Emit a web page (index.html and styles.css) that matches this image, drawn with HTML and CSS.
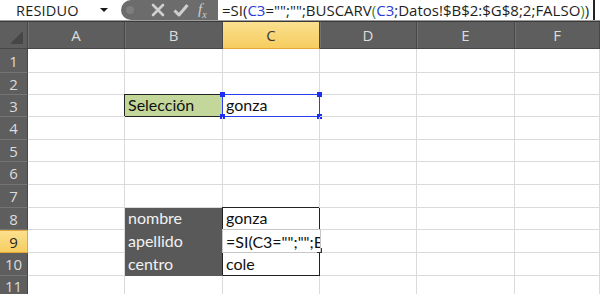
FILE: index.html
```html
<html>
  <head>
    <title>Libro1 - Excel</title>
    <link rel="stylesheet" href="styles.css">
  </head>
  <body>
    <div class="formulaBar">
      <div class="nameBox">
        <span class="nameText">RESIDUO</span>
        <span class="nameArrow"></span>
      </div>
      <div class="fxButtons">
        <span class="grip"></span>
        <svg class="fxIcon" width="14" height="14" viewBox="0 0 14 14">
          <path d="M2 2 L12 12 M12 2 L2 12" stroke="#cfcfcf" stroke-width="2.6" stroke-linecap="round"/>
        </svg>
        <svg class="fxIcon" width="16" height="14" viewBox="0 0 16 14">
          <path d="M1.5 7.5 L6 12 L14.5 2" fill="none" stroke="#cfcfcf" stroke-width="3" stroke-linejoin="round"/>
        </svg>
        <span class="fxLabel"><i>f</i><sub>x</sub></span>
      </div>
      <div class="formulaInput">
        <span>=SI(</span><span class="refBlue">C3</span><span>="";"";BUSCARV</span><span class="refGreen">(</span><span class="refBlue">C3</span><span>;Datos!$B$2:$G$8;2;FALSO</span><span class="refGreen">)</span><span>)</span>
      </div>
    </div>

    <div class="sheet">
      <!-- column headers -->
      <div class="corner"><span class="cornerTriangle"></span></div>
      <div class="colHead">A</div>
      <div class="colHead">B</div>
      <div class="colHead active">C</div>
      <div class="colHead">D</div>
      <div class="colHead">E</div>
      <div class="colHead">F</div>

      <div class="rowHead">1</div>
      <div class="cell"></div><div class="cell"></div><div class="cell"></div><div class="cell"></div><div class="cell"></div><div class="cell"></div>

      <div class="rowHead">2</div>
      <div class="cell"></div><div class="cell"></div><div class="cell"></div><div class="cell"></div><div class="cell"></div><div class="cell"></div>

      <div class="rowHead">3</div>
      <div class="cell"></div>
      <div class="cell label">Selección</div>
      <div class="cell refCell">gonza
        <span class="handle tl"></span><span class="handle tr"></span>
        <span class="handle bl"></span><span class="handle br"></span>
      </div>
      <div class="cell"></div><div class="cell"></div><div class="cell"></div>

      <div class="rowHead">4</div>
      <div class="cell"></div><div class="cell"></div><div class="cell"></div><div class="cell"></div><div class="cell"></div><div class="cell"></div>

      <div class="rowHead">5</div>
      <div class="cell"></div><div class="cell"></div><div class="cell"></div><div class="cell"></div><div class="cell"></div><div class="cell"></div>

      <div class="rowHead">6</div>
      <div class="cell"></div><div class="cell"></div><div class="cell"></div><div class="cell"></div><div class="cell"></div><div class="cell"></div>

      <div class="rowHead">7</div>
      <div class="cell"></div><div class="cell"></div><div class="cell"></div><div class="cell"></div><div class="cell"></div><div class="cell"></div>

      <div class="rowHead">8</div>
      <div class="cell"></div>
      <div class="cell dark">nombre</div>
      <div class="cell boxed">gonza</div>
      <div class="cell"></div><div class="cell"></div><div class="cell"></div>

      <div class="rowHead active">9</div>
      <div class="cell"></div>
      <div class="cell dark">apellido</div>
      <div class="cell editing">
        <div class="editBox">=SI(C3="";"";B</div>
        <span class="resizeGrip"></span>
      </div>
      <div class="cell"></div><div class="cell"></div><div class="cell"></div>

      <div class="rowHead">10</div>
      <div class="cell"></div>
      <div class="cell dark">centro</div>
      <div class="cell boxed">cole</div>
      <div class="cell"></div><div class="cell"></div><div class="cell"></div>

      <div class="rowHead">11</div>
      <div class="cell"></div><div class="cell"></div><div class="cell"></div><div class="cell"></div><div class="cell"></div><div class="cell"></div>
    </div>
  </body>
</html>
```

FILE: styles.css
```css
body {
  margin: 0;
  width: 600px;
  height: 294px;
  overflow: hidden;
  background-color: white;
  font-family: "Open Sans", "Noto Sans", sans-serif;
}

/* formula bar */
.formulaBar {
  display: flex;
  height: 20px;
  border-bottom: 1px solid #9c9c9c;
  background-color: white;
}

.nameBox {
  display: flex;
  align-items: center;
  width: 121px;
  padding-left: 16px;
  box-sizing: border-box;
}

.nameText {
  font-size: 14.5px;
  color: #1e1e1e;
  letter-spacing: 0.2px;
}

.nameArrow {
  margin-left: 21px;
  width: 0;
  height: 0;
  border-left: 4px solid transparent;
  border-right: 4px solid transparent;
  border-top: 4px solid #1a1a1a;
}

.fxButtons {
  display: flex;
  align-items: center;
  width: 97px;
  height: 20px;
  background-color: #6c6c6c;
  border-radius: 10px 0 0 10px;
  box-sizing: border-box;
  padding-left: 5px;
}

.grip {
  width: 8px;
  height: 8px;
  border-radius: 50%;
  background-color: #7e7e7e;
  margin-right: 17px;
}

.fxIcon {
  margin-right: 8px;
}

.fxLabel {
  font-family: "Liberation Serif", serif;
  color: #cfcfcf;
  font-size: 15px;
  margin-left: 1px;
}

.fxLabel sub {
  font-size: 10px;
  font-style: italic;
}

.formulaInput {
  flex: 1;
  display: flex;
  align-items: center;
  padding-left: 4px;
  margin-right: 5px;
  border-right: 2px solid #222;
  font-size: 15px;
  color: #1e1e1e;
  white-space: nowrap;
  overflow: hidden;
}

.refBlue {
  color: #2a3bd6;
}

.refGreen {
  color: #2e8b3a;
}

/* sheet grid */
.sheet {
  display: grid;
  grid-template-columns: 28px 97px 98px 97px 97px 98px 1fr;
  grid-template-rows: 27px 24px 22px 22px 23px 22px 23px 23px 22px 23px 23px 1fr;
  border-top: 1px solid #3a3a3a;
  font-family: "Lato", "Liberation Sans", sans-serif;
  font-size: 16px;
}

.corner {
  position: relative;
  background-color: #5e5e5e;
  border-right: 1px solid #474747;
  border-bottom: 1px solid #474747;
}

.cornerTriangle {
  position: absolute;
  right: 4px;
  bottom: 4px;
  width: 0;
  height: 0;
  border-left: 13px solid transparent;
  border-bottom: 13px solid #464646;
}

.colHead {
  display: flex;
  align-items: center;
  justify-content: center;
  background-color: #5e5e5e;
  color: #dcdcdc;
  border-right: 1px solid #474747;
  border-bottom: 1px solid #474747;
  box-shadow: inset 1px 0 0 #727272;
  font-family: "Open Sans", sans-serif;
  font-size: 15px;
}

.colHead.active {
  background: linear-gradient(#fbe08f, #f6cd60);
  color: #3a3a3a;
  border-bottom: 1px solid #e3a838;
  box-shadow: none;
}

.rowHead {
  display: flex;
  align-items: center;
  justify-content: center;
  background-color: #5e5e5e;
  color: #dcdcdc;
  border-right: 1px solid #474747;
  border-bottom: 1px solid #747474;
  font-family: "Open Sans", sans-serif;
  font-size: 15px;
}

.rowHead.active {
  background: linear-gradient(#fbe08f, #f6cd60);
  color: #262626;
  border: 1px solid #e3a838;
  border-left: none;
}

.cell {
  position: relative;
  display: flex;
  align-items: flex-end;
  padding: 0 3px 1px;
  border-right: 1px solid #dadada;
  border-bottom: 1px solid #dadada;
  color: #111;
  white-space: nowrap;
  line-height: 20px;
}

.label {
  background-color: #c4d79b;
  border-color: #222;
  box-shadow: -1px -1px 0 #222;
}

.refCell {
  border-color: #2b3ff0;
  box-shadow: -1px -1px 0 #2b3ff0;
}

.handle {
  position: absolute;
  width: 5px;
  height: 5px;
  background-color: #1d2ff5;
}

.handle.tl { left: -3px; top: -3px; }
.handle.tr { right: -3px; top: -3px; }
.handle.bl { left: -3px; bottom: -3px; }
.handle.br { right: -3px; bottom: -3px; }

.dark {
  background-color: #595959;
  color: #f2f2f2;
  border-color: #595959;
}

.boxed {
  border-color: #222;
  box-shadow: -1px -1px 0 #222;
}

.editing {
  border-right-color: #222;
}

.editBox {
  position: absolute;
  left: -1px;
  top: -1px;
  width: 99px;
  height: 24px;
  box-sizing: border-box;
  border: 1px solid #c6c6c6;
  background-color: white;
  padding: 2px 3px 0;
  line-height: 20px;
  white-space: nowrap;
  overflow: hidden;
  z-index: 1;
}

.resizeGrip {
  position: absolute;
  right: -3px;
  bottom: -1px;
  width: 4px;
  height: 4px;
  border-right: 1px solid #333;
  border-bottom: 1px solid #333;
  z-index: 2;
}
```
